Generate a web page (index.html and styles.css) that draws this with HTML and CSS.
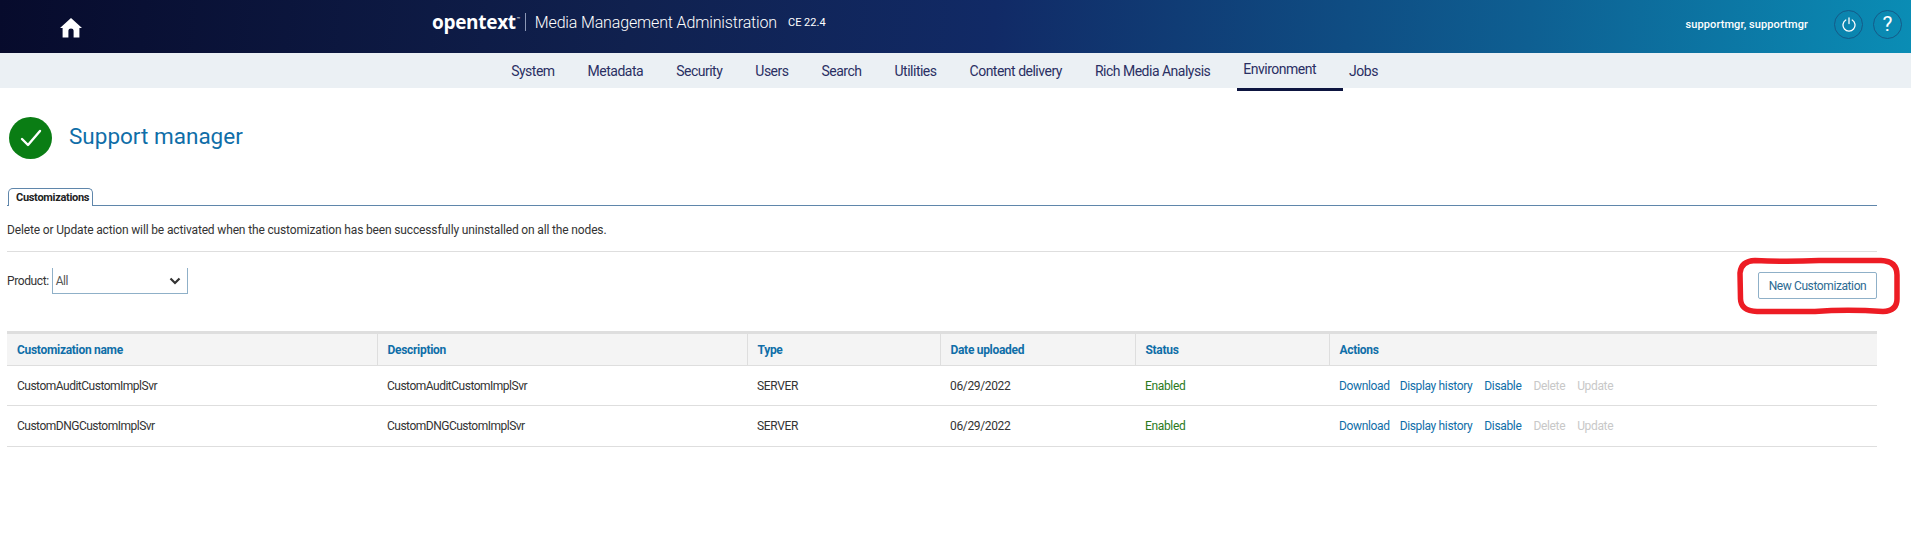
FILE: index.html
```html
<!DOCTYPE html>
<html lang="en">
<head>
    <meta charset="UTF-8">
    <title>Media Management Administration</title>
    <link rel="stylesheet" href="styles.css">
</head>
<body>
    <header class="topbar">
        <div class="home">
            <svg width="22" height="20" viewBox="0 0 22 20"><path fill="#fff" d="M11 0 L22 10 L19.4 10 L19.4 19.5 L13.6 19.5 L13.6 12.5 Q13.6 10.6 11 10.6 Q8.4 10.6 8.4 12.5 L8.4 19.5 L2.6 19.5 L2.6 10 L0 10 Z"/></svg>
        </div>
        <div class="brand">
            <span class="logo">opentext</span><span class="tm">™</span>
            <span class="brand-sep"></span>
            <span class="app-name">Media Management Administration</span>
            <span class="version">CE 22.4</span>
        </div>
        <div class="user-tools">
            <span class="user-name">supportmgr, supportmgr</span>
            <button class="round-btn" type="button">
                <svg width="14" height="15" viewBox="0 0 14 15"><path fill="none" stroke="#fff" stroke-width="1.3" stroke-linecap="round" d="M3.8 3 A6 6 0 1 0 10.2 3 M7 0.8 V6.5"/></svg>
            </button>
            <button class="round-btn help" type="button">?</button>
        </div>
    </header>

    <nav class="mainnav">
        <a href="#">System</a>
        <a href="#">Metadata</a>
        <a href="#">Security</a>
        <a href="#">Users</a>
        <a href="#">Search</a>
        <a href="#">Utilities</a>
        <a href="#">Content delivery</a>
        <a href="#">Rich Media Analysis</a>
        <a href="#" class="active">Environment</a>
        <a href="#">Jobs</a>
    </nav>

    <main class="content">
        <div class="page-title">
            <span class="status-icon">
                <svg width="24" height="20" viewBox="0 0 24 20"><path fill="none" stroke="#fff" stroke-width="2.4" stroke-linecap="round" stroke-linejoin="round" d="M3 11 L9 17 L21 3"/></svg>
            </span>
            <h1>Support manager</h1>
        </div>

        <div class="tabs">
            <span class="tab">Customizations</span>
        </div>

        <p class="info">Delete or Update action will be activated when the customization has been successfully uninstalled on all the nodes.</p>

        <div class="toolbar">
            <label class="product">
                Product:
                <span class="select-box">All
                    <svg width="12" height="8" viewBox="0 0 12 8"><path fill="none" stroke="#333" stroke-width="2.2" d="M1.5 1.5 L6 6 L10.5 1.5"/></svg>
                </span>
            </label>
            <button class="new-btn" type="button">
                New Customization
                <svg class="red-mark" width="163" height="58" viewBox="0 0 163 58"><path fill="none" stroke="#ed1c24" stroke-width="5.5" d="M18 3.5 Q50 5 82 3.5 L144 3.5 Q160 4 160 18 L160 42 Q160 54 146 54.5 Q110 52 78 54.5 L20 54.5 Q4 54 3.5 42 L3 16 Q4 4 18 3.5 Z"/></svg>
            </button>
        </div>

        <table class="grid">
            <colgroup>
                <col class="col-name"><col class="col-desc"><col class="col-type"><col class="col-date"><col class="col-status"><col>
            </colgroup>
            <thead>
                <tr>
                    <th>Customization name</th>
                    <th>Description</th>
                    <th>Type</th>
                    <th>Date uploaded</th>
                    <th>Status</th>
                    <th>Actions</th>
                </tr>
            </thead>
            <tbody>
                <tr>
                    <td class="cust-name">CustomAuditCustomImplSvr</td>
                    <td class="cust-name">CustomAuditCustomImplSvr</td>
                    <td>SERVER</td>
                    <td>06/29/2022</td>
                    <td class="enabled">Enabled</td>
                    <td class="actions"><a href="#" class="act-dl">Download</a><a href="#">Display history</a><a href="#">Disable</a><span>Delete</span><span>Update</span></td>
                </tr>
                <tr>
                    <td class="cust-name">CustomDNGCustomImplSvr</td>
                    <td class="cust-name">CustomDNGCustomImplSvr</td>
                    <td>SERVER</td>
                    <td>06/29/2022</td>
                    <td class="enabled">Enabled</td>
                    <td class="actions"><a href="#" class="act-dl">Download</a><a href="#">Display history</a><a href="#">Disable</a><span>Delete</span><span>Update</span></td>
                </tr>
            </tbody>
        </table>
    </main>
</body>
</html>
```

FILE: styles.css
```css
:root {
    --navy: #0d1540;
    --blue: #0f6ea8;
    --line: #dedede;
    --text: #333;
}

body {
    margin: 0;
    font-family: Roboto, "Liberation Sans", sans-serif;
    font-size: 12px;
    color: var(--text);
    background: #fff;
}

.topbar {
    height: 53px;
    display: flex;
    align-items: center;
    color: #fff;
    background: linear-gradient(95deg, #070b2c 0%, #10214f 33%, #112a66 52%, #0e5f92 80%, #0a8db5 100%);
}

.home {
    width: 60px;
    padding-left: 60px;
    flex: none;
    display: flex;
    margin-top: 2px;
}

.brand {
    flex: 1;
    display: flex;
    align-items: center;
    padding-left: 312px;
    margin-top: -9px;
}

.logo {
    font-family: "Open Sans", sans-serif;
    font-weight: 700;
    font-size: 19px;
    letter-spacing: -0.3px;
}

.tm {
    font-size: 6px;
    margin: -8px 0 0 1px;
    width: 6px;
}

.brand-sep {
    width: 1px;
    height: 18px;
    margin: 0 9px 0 2px;
    background: #8c97b5;
}

.app-name {
    font-size: 16px;
    font-weight: 300;
    letter-spacing: -0.15px;
}

.version {
    font-size: 11px;
    margin-left: 11px;
}

.user-tools {
    display: flex;
    align-items: center;
    gap: 10px;
    padding-right: 9px;
    margin-top: -5px;
}

.user-name {
    font-size: 11px;
    font-weight: 500;
    letter-spacing: 0.1px;
    margin-right: 16px;
}

.round-btn {
    width: 29px;
    height: 29px;
    padding: 0;
    display: flex;
    align-items: center;
    justify-content: center;
    border: 1px solid #155a88;
    border-radius: 50%;
    background: transparent;
    color: #fff;
}

.round-btn.help {
    font-family: Roboto, sans-serif;
    font-size: 21px;
    font-weight: 400;
}

.mainnav {
    height: 35px;
    display: flex;
    justify-content: center;
    align-items: center;
    gap: 33px;
    padding-right: 22px;
    background: #ebf0f4;
}

.mainnav a {
    font-size: 14px;
    letter-spacing: -0.5px;
    color: #2a2f63;
    text-decoration: none;
}

.mainnav a.active {
    position: relative;
    top: -2px;
}

.mainnav a.active::after {
    content: "";
    position: absolute;
    left: -6px;
    right: -27px;
    top: 27px;
    height: 3px;
    background: var(--navy);
}

.content {
    padding: 0 34px 0 7px;
}

.page-title {
    display: flex;
    align-items: center;
    gap: 17px;
    padding: 29px 0 0 2px;
}

.status-icon {
    width: 43px;
    height: 42px;
    border-radius: 50%;
    background: #0a7d14;
    display: flex;
    align-items: center;
    justify-content: center;
}

.page-title h1 {
    margin: -5px 0 0;
    font-size: 22.5px;
    font-weight: 400;
    color: var(--blue);
}

.tabs {
    margin-top: 29px;
    height: 17px;
    border-bottom: 1px solid #5f86ab;
    padding-left: 1px;
}

.tab {
    display: block;
    box-sizing: border-box;
    width: 85px;
    height: 18px;
    padding-left: 7px;
    line-height: 18px;
    font-size: 11px;
    font-weight: 700;
    letter-spacing: -0.3px;
    color: #222;
    background: #fff;
    border: 1px solid #5f86ab;
    border-bottom: none;
    border-radius: 5px 5px 0 0;
}

.info {
    margin: 0;
    height: 45px;
    line-height: 49px;
    font-size: 12px;
    letter-spacing: -0.15px;
    border-bottom: 1px solid var(--line);
}

.toolbar {
    display: flex;
    justify-content: space-between;
    align-items: flex-start;
    padding-top: 16px;
    height: 63px;
}

.product {
    display: flex;
    align-items: center;
    gap: 3px;
    font-size: 12px;
    letter-spacing: -0.4px;
}

.select-box {
    box-sizing: border-box;
    width: 136px;
    height: 26px;
    padding: 0 6px 0 3px;
    display: flex;
    align-items: center;
    justify-content: space-between;
    color: #555;
    border: 1px solid #8fb0c8;
    border-top: none;
}

.new-btn {
    position: relative;
    width: 119px;
    height: 27px;
    margin-top: 4px;
    padding: 0;
    font-family: inherit;
    font-size: 12px;
    letter-spacing: -0.4px;
    color: #2c6a92;
    background: #fff;
    border: 1px solid #8fb0c8;
    border-radius: 2px;
}

.red-mark {
    position: absolute;
    left: -22px;
    top: -16px;
}

.grid {
    width: 100%;
    table-layout: fixed;
    border-collapse: collapse;
    border-top: 3px solid var(--line);
}

.col-name { width: 370px; }
.col-desc { width: 370px; }
.col-type { width: 193px; }
.col-date { width: 195px; }
.col-status { width: 194px; }

.grid th {
    height: 31px;
    padding: 0 10px;
    text-align: left;
    font-size: 12px;
    font-weight: 700;
    letter-spacing: -0.3px;
    color: var(--blue);
    background: #f4f4f4;
    border-bottom: 1px solid var(--line);
    border-left: 1px solid var(--line);
}

.grid th:first-child {
    border-left: none;
}

.grid td {
    height: 39px;
    padding: 0 10px;
    font-size: 12px;
    letter-spacing: -0.35px;
    border-bottom: 1px solid var(--line);
}

.grid tbody tr:last-child td {
    height: 40px;
}

.grid .cust-name {
    letter-spacing: -0.5px;
}

.grid .enabled {
    color: #2a7a1c;
}

.actions a,
.actions span {
    margin-right: 12px;
}

.actions .act-dl {
    margin-right: 10px;
}

.actions a {
    color: var(--blue);
    text-decoration: none;
}

.actions span {
    color: #c8c8c8;
}
```
